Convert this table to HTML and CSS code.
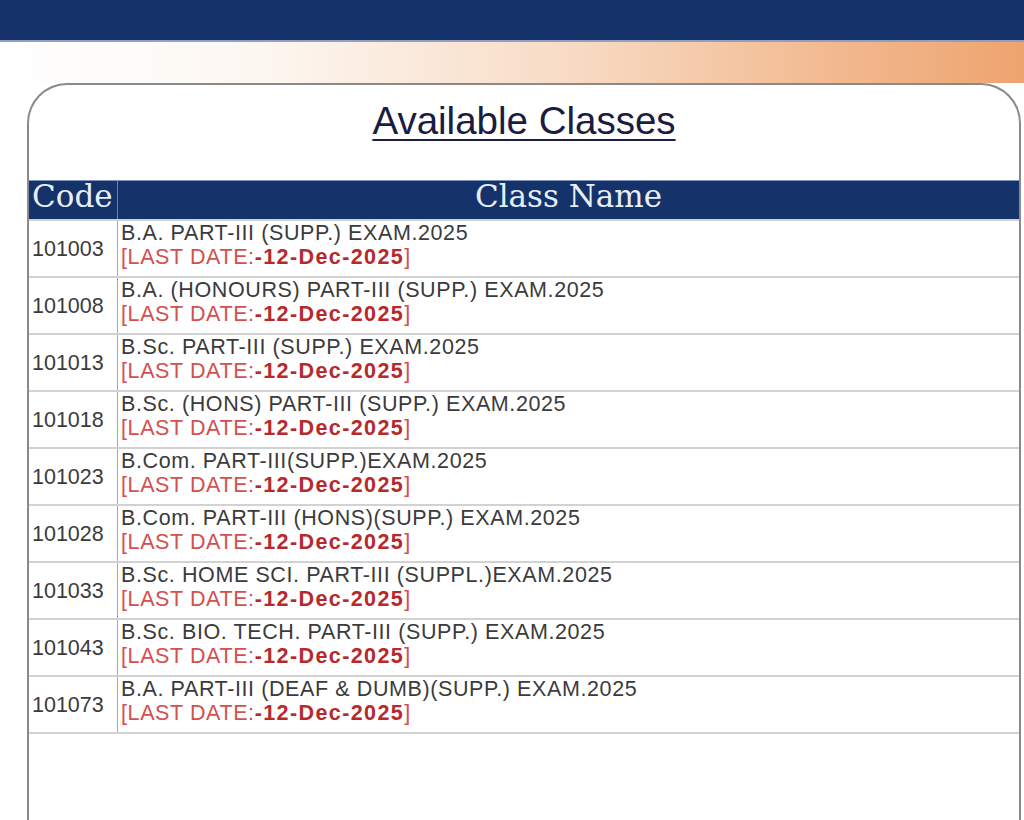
FILE: index.html
```html
<!DOCTYPE html>
<html lang="en">
<head>
<meta charset="utf-8">
<title>Available Classes</title>
<link rel="stylesheet" href="styles.css">
</head>
<body>
<div class="topbar"></div>
<div class="band"></div>
<div class="card">
  <h1 class="title">Available Classes</h1>
  <table class="classes">
    <thead>
      <tr><th class="c-code">Code</th><th class="c-name">Class Name</th></tr>
    </thead>
    <tbody>
      <tr><td class="code">101003</td><td class="name">B.A. PART-III (SUPP.) EXAM.2025<br><span class="ld">[LAST DATE:<b>-12-Dec-2025</b>]</span></td></tr>
      <tr><td class="code">101008</td><td class="name">B.A. (HONOURS) PART-III (SUPP.) EXAM.2025<br><span class="ld">[LAST DATE:<b>-12-Dec-2025</b>]</span></td></tr>
      <tr><td class="code">101013</td><td class="name">B.Sc. PART-III (SUPP.) EXAM.2025<br><span class="ld">[LAST DATE:<b>-12-Dec-2025</b>]</span></td></tr>
      <tr><td class="code">101018</td><td class="name">B.Sc. (HONS) PART-III (SUPP.) EXAM.2025<br><span class="ld">[LAST DATE:<b>-12-Dec-2025</b>]</span></td></tr>
      <tr><td class="code">101023</td><td class="name">B.Com. PART-III(SUPP.)EXAM.2025<br><span class="ld">[LAST DATE:<b>-12-Dec-2025</b>]</span></td></tr>
      <tr><td class="code">101028</td><td class="name">B.Com. PART-III (HONS)(SUPP.) EXAM.2025<br><span class="ld">[LAST DATE:<b>-12-Dec-2025</b>]</span></td></tr>
      <tr><td class="code">101033</td><td class="name">B.Sc. HOME SCI. PART-III (SUPPL.)EXAM.2025<br><span class="ld">[LAST DATE:<b>-12-Dec-2025</b>]</span></td></tr>
      <tr><td class="code">101043</td><td class="name">B.Sc. BIO. TECH. PART-III (SUPP.) EXAM.2025<br><span class="ld">[LAST DATE:<b>-12-Dec-2025</b>]</span></td></tr>
      <tr><td class="code">101073</td><td class="name">B.A. PART-III (DEAF &amp; DUMB)(SUPP.) EXAM.2025<br><span class="ld">[LAST DATE:<b>-12-Dec-2025</b>]</span></td></tr>
    </tbody>
  </table>
</div>
</body>
</html>
```
FILE: styles.css
```css
html, body {
  margin: 0;
  padding: 0;
  background: #ffffff;
}
body {
  font-family: "Liberation Sans", Arial, sans-serif;
  height: 820px;
  overflow: hidden;
}
.topbar {
  height: 40px;
  background: #15336a;
  border-bottom: 2px solid #8fa0c0;
}
.band {
  height: 41px;
  background: linear-gradient(to right, #ffffff 0%, #fdf7f2 25%, #f8dcc6 55%, #f2bb92 80%, #eea46f 100%);
}
.card {
  margin-left: 27px;
  width: 990px;
  height: 760px;
  border: 2px solid #8a8a8a;
  border-bottom: none;
  border-radius: 40px 40px 0 0;
  background: #ffffff;
}
.title {
  margin: 0;
  padding-top: 14px;
  height: 83px;
  box-sizing: border-box;
  text-align: center;
  font-family: "Liberation Sans", Arial, sans-serif;
  font-weight: normal;
  font-size: 38.5px;
  line-height: 44px;
  color: #1a1c42;
  text-decoration: underline;
  text-decoration-thickness: 2px;
  text-underline-offset: 5px;
}
.classes {
  width: 100%;
  border-collapse: collapse;
  margin-top: 12px;
}
.classes th {
  background: #15336a;
  color: #e8eef8;
  font-family: "DejaVu Serif", "Liberation Serif", serif;
  font-weight: normal;
  font-size: 31px;
  line-height: 30px;
  height: 38px;
  padding: 0;
  vertical-align: top;
  border-top: 1px solid #7f95bd;
}
.classes th.c-code {
  width: 85px;
  text-align: left;
  padding-left: 3px;
  border-right: 1px solid #6f85b0;
}
.classes th.c-name {
  text-align: center;
}
.classes td {
  border-top: 2px solid #d2d2d2;
  border-bottom: 2px solid #d2d2d2;
  height: 55px;
  padding: 0;
  color: #3b3b3b;
  font-size: 21.5px;
  line-height: 24px;
}
.classes td.code {
  padding-left: 3px;
  font-size: 21.5px;
  vertical-align: middle;
  border-right: 1px solid #a8a8a8;
}
.classes td.name {
  padding-left: 3px;
  vertical-align: top;
  letter-spacing: 0.6px;
}
.ld {
  color: #d4504e;
}
.ld b {
  color: #b7292b;
  font-weight: bold;
  letter-spacing: 1.4px;
}
```
